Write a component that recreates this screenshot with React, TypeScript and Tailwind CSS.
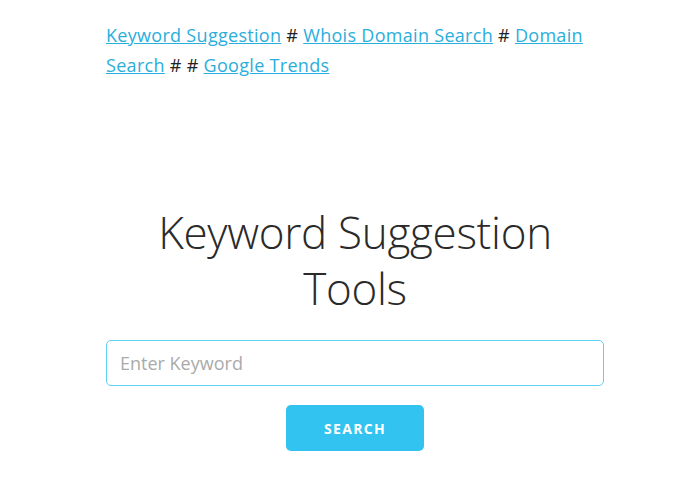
import React from "react";

export default function App() {
  const font = { fontFamily: '"Open Sans", "Noto Sans", Arial, sans-serif' };
  return (
    <div className="min-h-[494px] w-full bg-white" style={font}>
      <div className="ml-[106px] w-[498px] pt-[20px]">
        <p className="text-[18px] leading-[30px] tracking-[0.3px] text-[#222]">
          <a href="#" className="text-[#2aaedc] underline">Keyword Suggestion</a> #{" "}
          <a href="#" className="text-[#2aaedc] underline">Whois Domain Search</a> #{" "}
          <a href="#" className="text-[#2aaedc] underline">Domain Search</a> # #{" "}
          <a href="#" className="text-[#2aaedc] underline">Google Trends</a>
        </p>
        <h1 className="mt-[124px] text-center text-[44px] font-light leading-[56px] tracking-[-0.3px] text-[#2a2a2a]">
          Keyword Suggestion
          <br />
          Tools
        </h1>
        <div className="mt-[24px]">
          <input
            type="text"
            placeholder="Enter Keyword"
            className="block h-[46px] w-full rounded-[5px] border border-[#5fcff2] bg-white px-[13px] text-[18px] text-[#222] outline-none placeholder:text-[#aaa]"
          />
        </div>
        <div className="mt-[19px] flex justify-center">
          <button className="h-[46px] w-[138px] rounded-[5px] bg-[#33C3F0] text-[14px] font-bold tracking-[1.3px] text-white">
            SEARCH
          </button>
        </div>
      </div>
    </div>
  );
}
